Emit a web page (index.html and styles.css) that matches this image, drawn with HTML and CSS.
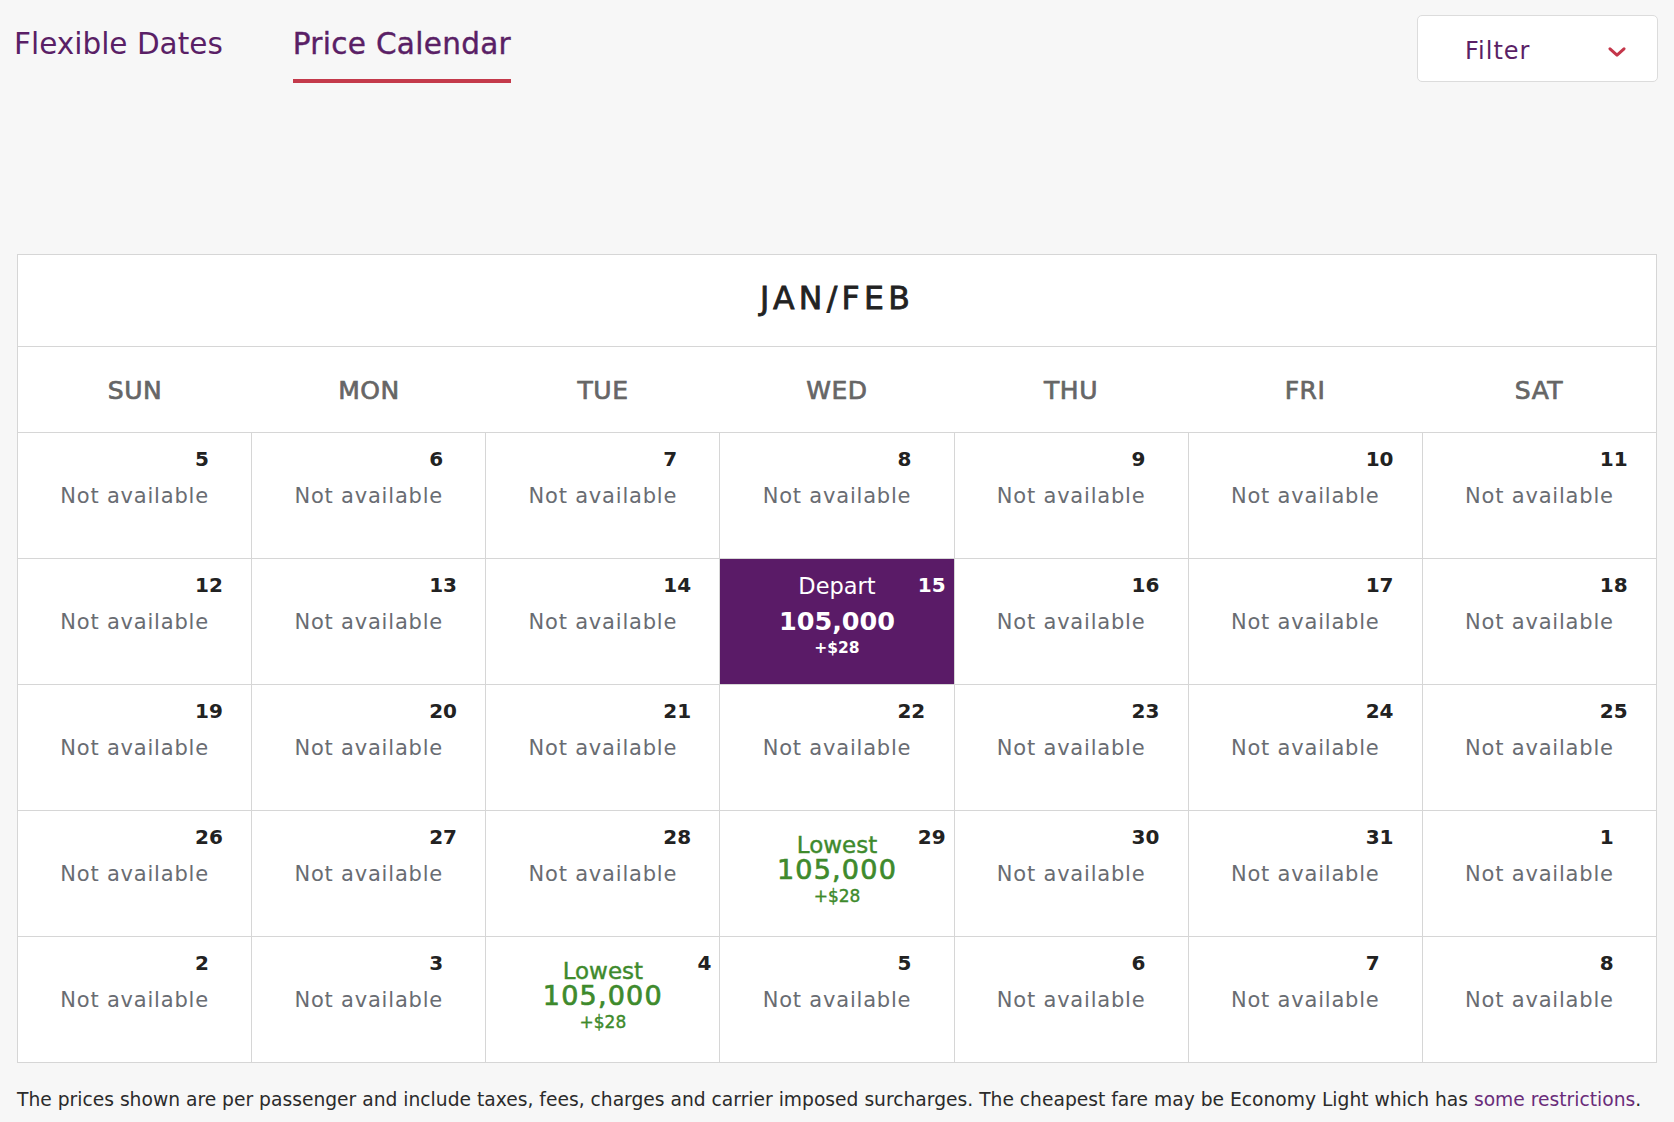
FILE: index.html
```html
<!DOCTYPE html>
<html lang="en">
<head>
  <meta charset="UTF-8" />
  <meta name="viewport" content="width=device-width, initial-scale=1.0" />
  <title>Price Calendar</title>
  <link rel="stylesheet" href="styles.css">
</head>
<body>
  <header class="topbar">
    <nav class="tabs">
      <a href="#" class="tab">Flexible Dates</a>
      <a href="#" class="tab active">Price Calendar</a>
    </nav>
    <button class="filter">
      <span>Filter</span>
      <svg class="filter-chevron" width="18" height="10" viewBox="0 0 18 10">
        <path d="M2 1.8 L9 8.2 L16 1.8" fill="none" stroke="#c4364a" stroke-width="3" stroke-linecap="round" stroke-linejoin="round"/>
      </svg>
    </button>
  </header>

  <main class="calendar">
    <div class="month">JAN/FEB</div>

    <div class="weekdays">
      <div>SUN</div>
      <div>MON</div>
      <div>TUE</div>
      <div>WED</div>
      <div>THU</div>
      <div>FRI</div>
      <div>SAT</div>
    </div>

    <div class="days">
      <!-- week 1 -->
      <div class="day"><span class="day-num">5</span><span class="day-status">Not available</span></div>
      <div class="day"><span class="day-num">6</span><span class="day-status">Not available</span></div>
      <div class="day"><span class="day-num">7</span><span class="day-status">Not available</span></div>
      <div class="day"><span class="day-num">8</span><span class="day-status">Not available</span></div>
      <div class="day"><span class="day-num">9</span><span class="day-status">Not available</span></div>
      <div class="day"><span class="day-num">10</span><span class="day-status">Not available</span></div>
      <div class="day"><span class="day-num">11</span><span class="day-status">Not available</span></div>

      <!-- week 2 -->
      <div class="day"><span class="day-num">12</span><span class="day-status">Not available</span></div>
      <div class="day"><span class="day-num">13</span><span class="day-status">Not available</span></div>
      <div class="day"><span class="day-num">14</span><span class="day-status">Not available</span></div>
      <div class="day fare depart">
        <span class="day-num">15</span>
        <div class="fare-label">Depart</div>
        <div class="fare-miles">105,000</div>
        <div class="fare-cash">+$28</div>
      </div>
      <div class="day"><span class="day-num">16</span><span class="day-status">Not available</span></div>
      <div class="day"><span class="day-num">17</span><span class="day-status">Not available</span></div>
      <div class="day"><span class="day-num">18</span><span class="day-status">Not available</span></div>

      <!-- week 3 -->
      <div class="day"><span class="day-num">19</span><span class="day-status">Not available</span></div>
      <div class="day"><span class="day-num">20</span><span class="day-status">Not available</span></div>
      <div class="day"><span class="day-num">21</span><span class="day-status">Not available</span></div>
      <div class="day"><span class="day-num">22</span><span class="day-status">Not available</span></div>
      <div class="day"><span class="day-num">23</span><span class="day-status">Not available</span></div>
      <div class="day"><span class="day-num">24</span><span class="day-status">Not available</span></div>
      <div class="day"><span class="day-num">25</span><span class="day-status">Not available</span></div>

      <!-- week 4 -->
      <div class="day"><span class="day-num">26</span><span class="day-status">Not available</span></div>
      <div class="day"><span class="day-num">27</span><span class="day-status">Not available</span></div>
      <div class="day"><span class="day-num">28</span><span class="day-status">Not available</span></div>
      <div class="day fare lowest">
        <span class="day-num">29</span>
        <div class="fare-label">Lowest</div>
        <div class="fare-miles">105,000</div>
        <div class="fare-cash">+$28</div>
      </div>
      <div class="day"><span class="day-num">30</span><span class="day-status">Not available</span></div>
      <div class="day"><span class="day-num">31</span><span class="day-status">Not available</span></div>
      <div class="day"><span class="day-num">1</span><span class="day-status">Not available</span></div>

      <!-- week 5 -->
      <div class="day"><span class="day-num">2</span><span class="day-status">Not available</span></div>
      <div class="day"><span class="day-num">3</span><span class="day-status">Not available</span></div>
      <div class="day fare lowest">
        <span class="day-num">4</span>
        <div class="fare-label">Lowest</div>
        <div class="fare-miles">105,000</div>
        <div class="fare-cash">+$28</div>
      </div>
      <div class="day"><span class="day-num">5</span><span class="day-status">Not available</span></div>
      <div class="day"><span class="day-num">6</span><span class="day-status">Not available</span></div>
      <div class="day"><span class="day-num">7</span><span class="day-status">Not available</span></div>
      <div class="day"><span class="day-num">8</span><span class="day-status">Not available</span></div>
    </div>
  </main>

  <footer class="note">
    <p>The prices shown are per passenger and include taxes, fees, charges and carrier imposed surcharges. The cheapest fare may be Economy Light which has <a href="#">some restrictions</a>.</p>
  </footer>
</body>
</html>
```

FILE: styles.css
```css
/* Global Styles */
* {
  margin: 0;
  padding: 0;
  box-sizing: border-box;
}

body {
  background: #f7f7f7;
  color: #333;
  font-family: 'DejaVu Sans', sans-serif;
}

a {
  text-decoration: none;
  color: inherit;
}

/* Top bar: tabs + filter */
.topbar {
  display: flex;
  justify-content: space-between;
  align-items: flex-start;
  padding: 0 16px 0 14px;
}

.tabs {
  display: flex;
  gap: 70px;
  padding-top: 27px;
}

.tab {
  font-size: 29.5px;
  line-height: 34px;
  color: #5a1f66;
  padding-bottom: 18px;
  border-bottom: 4px solid transparent;
}

.tab.active {
  border-bottom-color: #c43a4b;
  letter-spacing: 0.3px;
  -webkit-text-stroke: 0.4px #5a1f66;
}

.filter {
  margin-top: 15px;
  width: 241px;
  height: 67px;
  display: flex;
  align-items: center;
  justify-content: space-between;
  padding: 4px 31px 0 47px;
  background: #fff;
  border: 1px solid #dcdcdc;
  border-radius: 5px;
  font-family: 'DejaVu Sans', sans-serif;
  font-size: 24px;
  letter-spacing: 1px;
  color: #5a1f66;
  cursor: pointer;
}

.filter-chevron {
  margin-top: 2px;
}

/* Calendar */
.calendar {
  margin: 171px 17px 0;
  background: #fff;
  border-top: 1px solid #d6d6d6;
  border-left: 1px solid #d6d6d6;
}

.month {
  height: 92px;
  display: flex;
  align-items: center;
  justify-content: center;
  padding-bottom: 5px;
  border-right: 1px solid #d6d6d6;
  border-bottom: 1px solid #d6d6d6;
  font-size: 31.5px;
  letter-spacing: 4.3px;
  color: #222;
  -webkit-text-stroke: 0.8px #222;
}

.weekdays {
  display: grid;
  grid-template-columns: repeat(7, 1fr);
  height: 86px;
  align-items: center;
  padding-top: 2px;
  border-right: 1px solid #d6d6d6;
  border-bottom: 1px solid #d6d6d6;
  text-align: center;
  font-size: 25px;
  letter-spacing: 0.5px;
  color: #666;
  -webkit-text-stroke: 0.7px #666;
}

.days {
  display: grid;
  grid-template-columns: repeat(7, 1fr);
}

.day {
  position: relative;
  height: 126px;
  padding-top: 14px;
  border-right: 1px solid #d6d6d6;
  border-bottom: 1px solid #d6d6d6;
  text-align: center;
}

.day-num {
  display: block;
  text-align: left;
  padding-left: 177px;
  font-size: 20px;
  font-weight: bold;
  line-height: 24px;
  color: #222;
}

.day-status {
  display: block;
  margin-top: 13px;
  font-size: 21px;
  letter-spacing: 0.8px;
  line-height: 24px;
  color: #696c72;
}

/* Fare cells */
.fare .day-num {
  position: absolute;
  top: 14px;
  right: 8px;
  padding: 0;
}

.lowest {
  color: #3e8a2c;
  -webkit-text-stroke: 0.4px #3e8a2c;
}

.lowest .day-num {
  -webkit-text-stroke: 0;
}

.lowest .fare-label {
  margin-top: 9px;
  font-size: 23px;
  line-height: 23px;
}

.lowest .fare-miles {
  font-size: 27px;
  line-height: 26px;
  letter-spacing: 1.2px;
  -webkit-text-stroke: 0.7px #3e8a2c;
}

.lowest .fare-cash {
  font-size: 17px;
  line-height: 27px;
}

.depart {
  background: #5a1b67;
  color: #fff;
}

.depart .day-num {
  color: #fff;
}

.depart .fare-label {
  margin-top: 1px;
  font-size: 22.5px;
  line-height: 24px;
}

.depart .fare-miles {
  margin-top: 8px;
  font-size: 25.5px;
  font-weight: bold;
  line-height: 30px;
}

.depart .fare-cash {
  font-size: 15.5px;
  font-weight: bold;
  line-height: 25px;
}

/* Footer note */
.note {
  margin: 25px 17px 0;
  font-size: 18.7px;
  line-height: 24px;
  color: #2b2b2b;
}

.note a {
  color: #6a2c7a;
}
```
